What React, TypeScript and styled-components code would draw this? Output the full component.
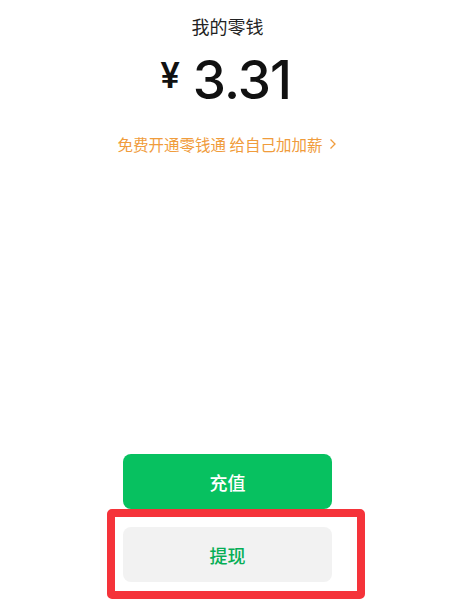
import React from "react";
import styled, { createGlobalStyle } from "styled-components";

const Global = createGlobalStyle`
  html, body { margin: 0; padding: 0; background: #ffffff; }
  body { font-family: "Noto Sans CJK SC", "Noto Sans", sans-serif; }
`;

const Page = styled.div`
  width: 455px;
  height: 600px;
  box-sizing: border-box;
  display: flex;
  flex-direction: column;
  align-items: center;
  padding: 13px 0 18px;
  overflow: hidden;
`;

const Title = styled.div`
  font-size: 18px;
  line-height: 26px;
  color: #222222;
`;

const Amount = styled.div`
  display: flex;
  align-items: center;
  gap: 13px;
  margin-top: 14px;
  margin-right: 4px;
  color: #111111;
`;

const Currency = styled.span`
  font-family: Inter, "Noto Sans", sans-serif;
  font-size: 35px;
  font-weight: 600;
  line-height: 1;
  margin-bottom: 10px;
`;

const Value = styled.span`
  font-family: Inter, "Noto Sans", sans-serif;
  font-size: 53px;
  font-weight: 500;
  line-height: 54px;
  letter-spacing: -1px;
  font-feature-settings: "pnum";
`;

const Promo = styled.div`
  margin-top: 27px;
  font-size: 15.5px;
  line-height: 20px;
  color: #f09c3c;
  display: flex;
  align-items: center;
  gap: 7px;
`;

const Buttons = styled.div`
  margin-top: auto;
  width: 209px;
  display: flex;
  flex-direction: column;
  gap: 18px;
`;

const Button = styled.button<{ $primary?: boolean }>`
  position: relative;
  width: 209px;
  height: 55px;
  border: none;
  border-radius: 8px;
  font-family: "Noto Sans CJK SC", sans-serif;
  font-size: 18px;
  font-weight: 500;
  background: ${(p) => (p.$primary ? "#07c160" : "#f2f2f2")};
  color: ${(p) => (p.$primary ? "#ffffff" : "#06ae56")};
  padding: 0;
  cursor: pointer;
`;

const Highlight = styled.span`
  position: absolute;
  top: -18px;
  left: -16px;
  right: -33px;
  bottom: -17px;
  border: 8px solid #f5333a;
  border-radius: 5px;
  pointer-events: none;
`;

export default function App() {
  return (
    <>
      <Global />
      <Page>
        <Title>我的零钱</Title>
        <Amount>
          <Currency>¥</Currency>
          <Value>3.31</Value>
        </Amount>
        <Promo>
          <span>免费开通零钱通 给自己加加薪</span>
          <svg width="8" height="12" viewBox="0 0 8 12" fill="none">
            <path d="M1.5 1.5 L6 6 L1.5 10.5" stroke="#f09c3c" strokeWidth="1.3" />
          </svg>
        </Promo>
        <Buttons>
          <Button $primary>充值</Button>
          <Button>
            提现
            <Highlight />
          </Button>
        </Buttons>
      </Page>
    </>
  );
}
